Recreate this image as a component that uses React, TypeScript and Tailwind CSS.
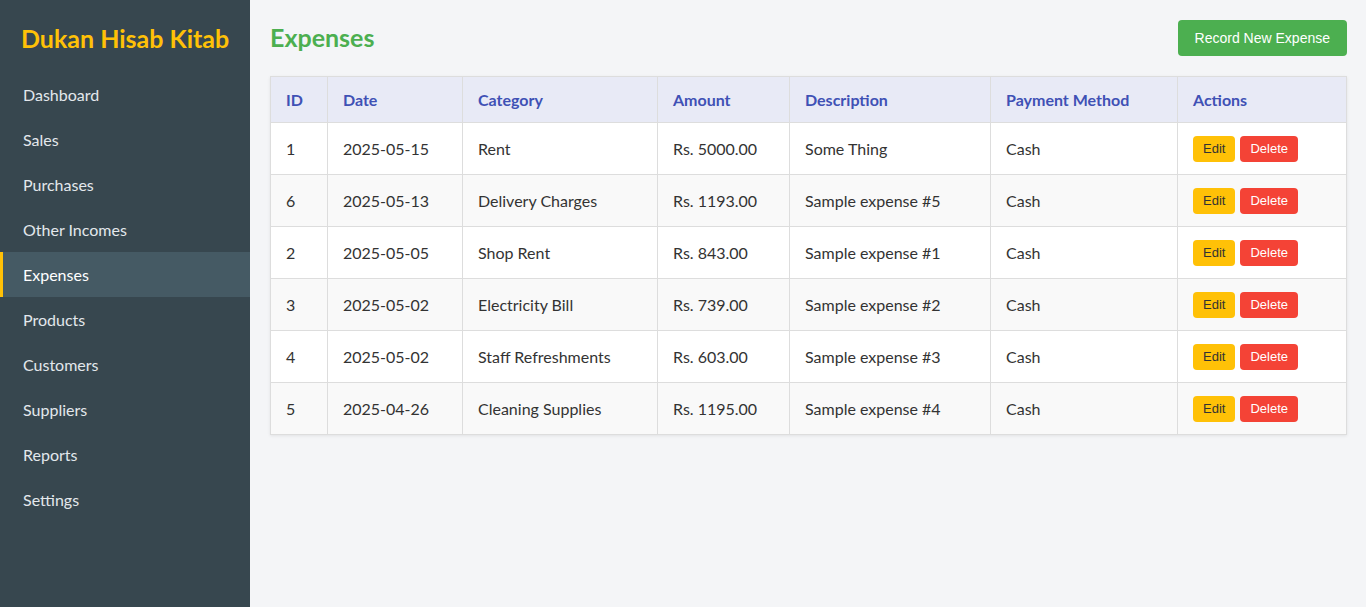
import React from "react";

const navItems = [
  "Dashboard",
  "Sales",
  "Purchases",
  "Other Incomes",
  "Expenses",
  "Products",
  "Customers",
  "Suppliers",
  "Reports",
  "Settings",
];

const expenses = [
  { id: 1, date: "2025-05-15", category: "Rent", amount: "Rs. 5000.00", description: "Some Thing", method: "Cash" },
  { id: 6, date: "2025-05-13", category: "Delivery Charges", amount: "Rs. 1193.00", description: "Sample expense #5", method: "Cash" },
  { id: 2, date: "2025-05-05", category: "Shop Rent", amount: "Rs. 843.00", description: "Sample expense #1", method: "Cash" },
  { id: 3, date: "2025-05-02", category: "Electricity Bill", amount: "Rs. 739.00", description: "Sample expense #2", method: "Cash" },
  { id: 4, date: "2025-05-02", category: "Staff Refreshments", amount: "Rs. 603.00", description: "Sample expense #3", method: "Cash" },
  { id: 5, date: "2025-04-26", category: "Cleaning Supplies", amount: "Rs. 1195.00", description: "Sample expense #4", method: "Cash" },
];

const headers = ["ID", "Date", "Category", "Amount", "Description", "Payment Method", "Actions"];
const colWidths = ["w-[57px]", "w-[135px]", "w-[195px]", "w-[132px]", "w-[201px]", "w-[187px]", "w-[169px]"];

const Sidebar: React.FC = () => {
  return (
    <aside className="w-[250px] shrink-0 bg-[#37474f] min-h-screen">
      <h1 className="text-[25px] font-bold text-[#ffc107] px-[21px] pt-[22px] pb-[18px] leading-[32px] whitespace-nowrap">
        Dukan Hisab Kitab
      </h1>
      <nav className="flex flex-col">
        {navItems.map((item) => {
          const active = item === "Expenses";
          return (
            <div
              key={item}
              className={
                active
                  ? "h-[45px] flex items-center pl-[20px] border-l-[3px] border-[#ffc107] bg-[#455a64] text-white text-[16px]"
                  : "h-[45px] flex items-center pl-[23px] text-[#e3e8ec] text-[16px]"
              }
            >
              {item}
            </div>
          );
        })}
      </nav>
    </aside>
  );
};

const ExpensesTable: React.FC = () => {
  return (
    <table className="w-full table-fixed border-collapse bg-white shadow-[0_1px_3px_rgba(0,0,0,0.08)]">
      <colgroup>
        {colWidths.map((w, i) => (
          <col key={i} className={w} />
        ))}
      </colgroup>
      <thead>
        <tr className="bg-[#e8eaf6] h-[46px]">
          {headers.map((h) => (
            <th
              key={h}
              className="border border-[#dddddd] px-[15px] text-left text-[16px] font-bold text-[#3f51b5]"
            >
              {h}
            </th>
          ))}
        </tr>
      </thead>
      <tbody>
        {expenses.map((e, i) => (
          <tr key={e.id} className={i % 2 === 1 ? "h-[52px] bg-[#f9f9f9]" : "h-[52px] bg-white"}>
            <td className="border border-[#dddddd] px-[15px] text-[16px] text-[#333333]">{e.id}</td>
            <td className="border border-[#dddddd] px-[15px] text-[16px] text-[#333333]">{e.date}</td>
            <td className="border border-[#dddddd] px-[15px] text-[16px] text-[#333333]">{e.category}</td>
            <td className="border border-[#dddddd] px-[15px] text-[16px] text-[#333333]">{e.amount}</td>
            <td className="border border-[#dddddd] px-[15px] text-[16px] text-[#333333]">{e.description}</td>
            <td className="border border-[#dddddd] px-[15px] text-[16px] text-[#333333]">{e.method}</td>
            <td className="border border-[#dddddd] px-[15px]">
              <div className="flex gap-[5px] font-['Liberation_Sans',Arial,sans-serif]">
                <button className="h-[26px] px-[10px] rounded-[4px] bg-[#ffc107] text-[#333333] text-[13px]">
                  Edit
                </button>
                <button className="h-[26px] px-[10px] rounded-[4px] bg-[#f44336] text-white text-[13px]">
                  Delete
                </button>
              </div>
            </td>
          </tr>
        ))}
      </tbody>
    </table>
  );
};

const App: React.FC = () => {
  return (
    <div className="flex min-h-screen font-['Lato','Noto_Sans',sans-serif]">
      <Sidebar />
      <main className="flex-1 bg-[#f4f5f7] px-[20px] pt-[20px]">
        <div className="flex items-center justify-between h-[36px] mb-[20px]">
          <h2 className="text-[25px] font-bold text-[#4caf50]">Expenses</h2>
          <button className="h-[36px] px-[17px] rounded-[4px] bg-[#4caf50] text-white text-[14px] font-['Liberation_Sans',Arial,sans-serif]">
            Record New Expense
          </button>
        </div>
        <ExpensesTable />
      </main>
    </div>
  );
};

export default App;
